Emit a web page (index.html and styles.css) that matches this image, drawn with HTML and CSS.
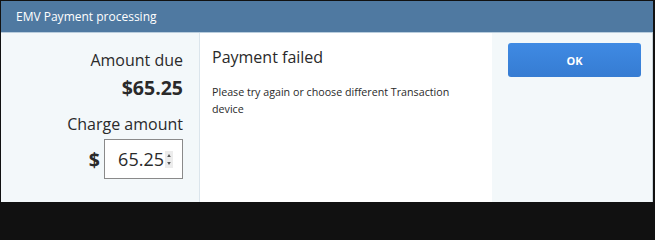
FILE: index.html
```html
<!DOCTYPE html>
<html>
<head>
<meta charset="utf-8">
<link rel="stylesheet" href="styles.css">
</head>
<body>
<div class="dialog">
  <div class="header">EMV Payment processing</div>
  <div class="content">
    <div class="left">
      <div class="label">Amount due</div>
      <div class="due">$65.25</div>
      <div class="label charge">Charge amount</div>
      <div class="input-row">
        <span class="dollar">$</span>
        <div class="input">
          <span class="value">65.25</span>
          <span class="spinner">
            <svg width="8" height="17" viewBox="0 0 8 17">
              <path d="M2.2 6 L4 3 L5.8 6 Z" fill="#555"/>
              <path d="M2.2 11 L4 14 L5.8 11 Z" fill="#555"/>
            </svg>
          </span>
        </div>
      </div>
    </div>
    <div class="middle">
      <div class="title">Payment failed</div>
      <div class="message">Please try again or choose different Transaction device</div>
    </div>
    <div class="right">
      <button class="ok">OK</button>
    </div>
  </div>
</div>
</body>
</html>
```
FILE: styles.css
```css
html, body {
  margin: 0;
  padding: 0;
  background: #111;
}
.dialog {
  width: 655px;
  height: 204px;
  box-sizing: border-box;
  border-top: 1px solid #111;
  border-left: 1px solid #111;
  border-bottom: 2px solid #111;
  border-right: 2px solid #111;
  display: flex;
  flex-direction: column;
  font-family: "Open Sans", "Liberation Sans", sans-serif;
  background: #f3f8fa;
  overflow: hidden;
}
.header {
  height: 31px;
  flex: none;
  background: #4f79a1;
  color: #fff;
  font-size: 12px;
  line-height: 31px;
  padding-left: 15px;
  border-bottom: 1px solid #b9cddd;
}
.content {
  flex: 1;
  display: flex;
  border-right: 1px solid #c9d3da;
}
.left {
  width: 199px;
  flex: none;
  box-sizing: border-box;
  padding: 16px 16px 0 0;
  border-right: 1px solid #dbe5ec;
  display: flex;
  flex-direction: column;
  align-items: flex-end;
  color: #2a2a2a;
}
.label {
  font-size: 16px;
  line-height: 23px;
}
.due {
  font-size: 19.5px;
  font-weight: 700;
  line-height: 26px;
  margin-top: 3px;
}
.charge {
  margin-top: 12px;
}
.input-row {
  display: flex;
  align-items: center;
  margin-top: 3px;
}
.dollar {
  font-size: 19.5px;
  font-weight: 700;
  margin-right: 4px;
}
.input {
  width: 79px;
  height: 40px;
  box-sizing: border-box;
  border: 1px solid #8a8a8a;
  background: #fff;
  display: flex;
  align-items: center;
  justify-content: flex-end;
  padding-right: 9px;
}
.value {
  font-size: 18px;
  color: #2a2a2a;
}
.spinner {
  width: 8px;
  height: 17px;
  background: #ececec;
  display: flex;
  margin-left: 1px;
}
.middle {
  width: 292px;
  flex: none;
  background: #fff;
  box-sizing: border-box;
  padding: 13px 12px 0 12px;
  color: #2a2a2a;
}
.title {
  font-size: 16px;
  line-height: 23px;
}
.message {
  font-size: 10.7px;
  line-height: 17px;
  margin-top: 15px;
  width: 250px;
}
.right {
  flex: 1;
  padding: 10px 0 0 16px;
}
.ok {
  width: 133px;
  height: 34px;
  border: none;
  border-radius: 3px;
  background: linear-gradient(#3f8ae3, #367cd2);
  color: #fff;
  font-family: "Open Sans", "Liberation Sans", sans-serif;
  font-weight: 700;
  font-size: 11px;
  padding: 0;
}
```
